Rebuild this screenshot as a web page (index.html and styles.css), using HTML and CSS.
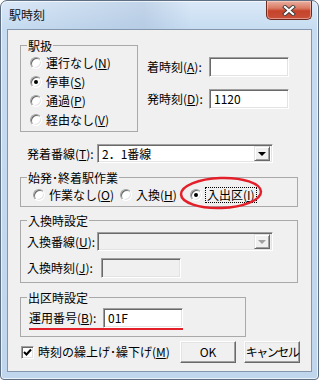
FILE: index.html
```html
<!DOCTYPE html>
<html lang="ja">
<head>
<meta charset="utf-8">
<title>駅時刻</title>
<link rel="stylesheet" href="styles.css">
</head>
<body>
<div class="window">
  <div class="titlebar">
    <span class="title">駅時刻</span>
    <div class="close">
      <svg width="14" height="11" viewBox="0 0 14 11">
        <path d="M3 2 L11 9 M11 2 L3 9" stroke="#3c3c3c" stroke-width="4" stroke-linecap="square" fill="none"/>
        <path d="M3 2 L11 9 M11 2 L3 9" stroke="#fff" stroke-width="2.2" stroke-linecap="square" fill="none"/>
      </svg>
    </div>
  </div>
  <div class="client">
    <div class="top">
      <fieldset class="grp grp-eki">
        <legend>駅扱</legend>
        <div class="radios-col">
          <label class="radio"><span class="rb"></span>運行なし(<u>N</u>)</label>
          <label class="radio"><span class="rb on"></span>停車(<u>S</u>)</label>
          <label class="radio"><span class="rb"></span>通過(<u>P</u>)</label>
          <label class="radio"><span class="rb"></span>経由なし(<u>V</u>)</label>
        </div>
      </fieldset>
      <div class="times">
        <div class="field"><span class="lbl lbl-time">着時刻(<u>A</u>):</span><span class="edit"></span></div>
        <div class="field"><span class="lbl lbl-time">発時刻(<u>D</u>):</span><span class="edit">1120</span></div>
      </div>
    </div>

    <div class="field combo-row">
      <span class="lbl lbl-line">発着番線(<u>T</u>):</span>
      <div class="combo"><span class="combo-text">2．1番線</span><span class="dd"><span class="tri"></span></span></div>
    </div>

    <fieldset class="grp grp-work">
      <legend>始発･終着駅作業</legend>
      <div class="radios-row">
        <label class="radio r1"><span class="rb"></span>作業なし(<u>O</u>)</label>
        <label class="radio r2"><span class="rb"></span>入換(<u>H</u>)</label>
        <label class="radio r3"><span class="rb on"></span><span class="focus">入出区(<u>I</u>)</span></label>
      </div>
    </fieldset>

    <fieldset class="grp grp-swap">
      <legend>入換時設定</legend>
      <div class="swap-body">
        <div class="field">
          <span class="lbl lbl-line">入換番線(<u>U</u>):</span>
          <div class="combo disabled"><span class="combo-text"></span><span class="dd"><span class="tri"></span></span></div>
        </div>
        <div class="field">
          <span class="lbl lbl-swap">入換時刻(<u>J</u>):</span>
          <span class="edit disabled"></span>
        </div>
      </div>
    </fieldset>

    <fieldset class="grp grp-out">
      <legend>出区時設定</legend>
      <div class="out-body">
        <div class="field marked">
          <span class="lbl lbl-swap">運用番号(<u>B</u>):</span>
          <span class="edit">01F</span>
        </div>
      </div>
    </fieldset>

    <div class="bottom">
      <label class="check"><span class="cb"><svg width="9" height="9" viewBox="0 0 9 9"><path d="M1 4 L3.5 6.5 L8 1.5" stroke="#000" stroke-width="2" fill="none"/></svg></span>時刻の繰上げ･繰下げ(<u>M</u>)</label>
      <button class="btn">OK</button>
      <button class="btn btn-cancel">キャンセル</button>
    </div>

    <svg class="annot" width="86" height="36" viewBox="0 0 86 36">
      <ellipse cx="43" cy="18" rx="40" ry="15" transform="rotate(-2 43 18)" fill="none" stroke="#e3202a" stroke-width="2.5"/>
    </svg>
  </div>
</div>
</body>
</html>
```

FILE: styles.css
```css
* { box-sizing: border-box; }

body {
  margin: 0;
  font-family: "Noto Sans CJK JP", "Noto Sans", sans-serif;
  font-size: 12px;
  line-height: 14px;
  color: #000;
}

u { text-decoration: underline; text-underline-offset: 1px; }

.window {
  width: 319px;
  height: 380px;
  display: flex;
  flex-direction: column;
  padding: 0 6px 7px;
  border: 1px solid #5f6f84;
  border-radius: 7px 7px 4px 4px;
  background:
    linear-gradient(90deg, rgba(255,255,255,0) 0, rgba(150,175,205,.35) 45%, rgba(255,255,255,0) 60%) 0 0 / 100% 28px no-repeat,
    linear-gradient(180deg, #dbe9f8 0, #c7dcf1 28px, #c0d6ed 100%);
  box-shadow: inset 0 0 0 1px rgba(255,255,255,.65);
}

.titlebar {
  height: 28px;
  flex: none;
  display: flex;
  justify-content: space-between;
  align-items: flex-start;
}

.title {
  margin: 7px 0 0 2px;
  font-size: 12px;
  color: #111;
}

.close {
  width: 46px;
  height: 19px;
  display: flex;
  align-items: center;
  justify-content: center;
  border: 1px solid #6a2a1f;
  border-top: none;
  border-radius: 0 0 5px 5px;
  background: linear-gradient(180deg, #eab0a1 0, #d97a63 40%, #c6432a 55%, #c9503a 100%);
  box-shadow: inset 0 0 0 1px rgba(255,220,210,.5);
}

.client {
  flex: 1;
  position: relative;
  background: #f0f0f0;
  border: 1px solid #8496ab;
  padding: 0 0 0 12px;
  display: flex;
  flex-direction: column;
  align-items: flex-start;
}

.top {
  margin-top: 7px;
  display: flex;
  align-items: flex-start;
}

.grp {
  margin: 0;
  padding: 0;
  min-width: 0;
  border: 1px solid #a9a9a9;
}

.grp legend {
  margin-left: 6px;
  padding: 2px 1px 0;
  line-height: 14px;
}

.grp-eki { width: 118px; height: 95px; }

.radios-col {
  padding-left: 9px;
  display: flex;
  flex-direction: column;
}

.radio {
  display: flex;
  align-items: center;
  height: 19px;
  white-space: nowrap;
}

.rb {
  position: relative;
  width: 12px;
  height: 12px;
  margin-right: 4px;
  flex: none;
  border-radius: 50%;
  background: #fff;
  border: 1px solid;
  border-color: #a0a0a0 #ffffff #ffffff #a0a0a0;
  box-shadow: inset 1px 1px 0 #696969, inset -1px -1px 0 #e3e3e3;
}

.rb.on::after {
  content: "";
  position: absolute;
  left: 3px;
  top: 3px;
  width: 4px;
  height: 4px;
  border-radius: 50%;
  background: #000;
}

.times {
  margin: 20px 0 0 9px;
  display: flex;
  flex-direction: column;
  gap: 12px;
}

.field {
  display: flex;
  align-items: center;
}

.lbl { white-space: nowrap; flex: none; }
.lbl-time { width: 62px; }
.lbl-line { width: 70px; }
.lbl-swap { width: 74px; }

.edit {
  width: 80px;
  height: 20px;
  flex: none;
  padding: 2px 0 0 4px;
  background: #fff;
  border: 1px solid;
  border-color: #a0a0a0 #ffffff #ffffff #a0a0a0;
  box-shadow: inset 1px 1px 0 #696969, inset -1px -1px 0 #e3e3e3;
}

.edit.disabled { background: #f0f0f0; }

.combo-row { margin: 12px 0 0 7px; }

.combo {
  width: 176px;
  height: 19px;
  display: flex;
  align-items: center;
  justify-content: space-between;
  padding: 2px;
  background: #fff;
  border: 1px solid;
  border-color: #a0a0a0 #ffffff #ffffff #a0a0a0;
  box-shadow: inset 1px 1px 0 #696969, inset -1px -1px 0 #e3e3e3;
}

.combo-text { padding-left: 2px; }

.dd {
  width: 16px;
  height: 15px;
  display: flex;
  align-items: center;
  justify-content: center;
  background: #f0f0f0;
  border: 1px solid;
  border-color: #e3e3e3 #696969 #696969 #e3e3e3;
  box-shadow: inset 1px 1px 0 #fff, inset -1px -1px 0 #a0a0a0;
}

.tri {
  width: 0;
  height: 0;
  border-left: 4px solid transparent;
  border-right: 4px solid transparent;
  border-top: 4px solid #000;
}

.combo.disabled { background: #f0f0f0; }
.combo.disabled .tri { border-top-color: #a0a0a0; }

.grp-work {
  width: 278px;
  height: 38px;
  margin-top: 6px;
}

.radios-row {
  padding-left: 12px;
  display: grid;
  grid-template-columns: 87px 70px auto;
}

.focus {
  outline: 1px dotted #000;
  outline-offset: 0;
  padding: 0 1px;
}

.grp-swap {
  width: 278px;
  height: 71px;
  margin-top: 5px;
}

.swap-body {
  padding: 4px 0 0 6px;
  display: flex;
  flex-direction: column;
  gap: 7px;
}

.grp-out {
  width: 226px;
  height: 48px;
  margin-top: 6px;
}

.out-body { padding: 3px 0 0 8px; }

.marked {
  display: inline-flex;
  border-bottom: 2px solid #e3202a;
}

.bottom {
  margin: 4px 0 0 1px;
  display: flex;
  align-items: center;
}

.check {
  width: 159px;
  display: flex;
  align-items: center;
  white-space: nowrap;
}

.cb {
  width: 13px;
  height: 13px;
  margin-right: 4px;
  display: flex;
  align-items: center;
  justify-content: center;
  background: #fff;
  border: 1px solid;
  border-color: #a0a0a0 #ffffff #ffffff #a0a0a0;
  box-shadow: inset 1px 1px 0 #696969, inset -1px -1px 0 #e3e3e3;
}

.btn {
  width: 56px;
  height: 22px;
  margin-right: 8px;
  padding: 0;
  font: inherit;
  white-space: nowrap;
  color: #000;
  background: #f0f0f0;
  border: 1px solid;
  border-color: #ffffff #696969 #696969 #ffffff;
  box-shadow: inset -1px -1px 0 #a0a0a0, inset 1px 1px 0 #e3e3e3;
}

.btn-cancel { letter-spacing: -1.5px; }

.annot {
  position: absolute;
  left: 170px;
  top: 145px;
}
```
